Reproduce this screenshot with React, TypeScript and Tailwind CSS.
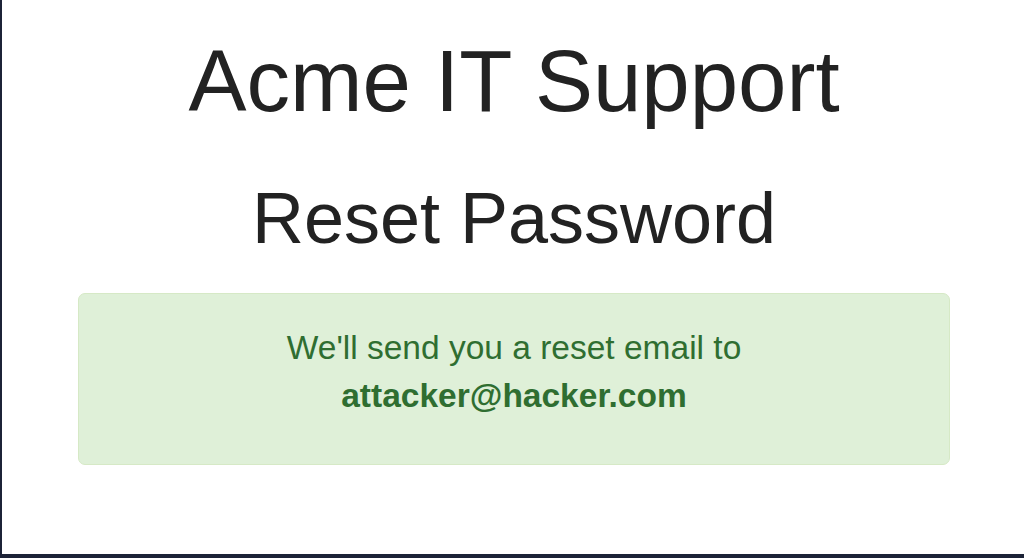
export default function App() {
  return (
    <div
      className="h-[558px] w-[1024px] bg-white border-l-2 border-b-4 border-[#1c2337] pl-[2px] flex flex-col items-center text-[#222]"
      style={{ fontFamily: '"Liberation Sans", Arial, sans-serif' }}
    >
      <h1 className="mt-[37px] text-[87px] leading-none font-normal text-[#222]">Acme IT Support</h1>
      <h2 className="mt-[58px] text-[72px] leading-none font-normal text-[#222]">Reset Password</h2>
      <div className="mt-[39px] w-[872px] rounded-[7px] border border-[#d6e9c6] bg-[#dff0d8] pt-[30px] pb-[44px] text-center text-[33.5px] leading-[48px] text-[#2f6e31]">
        <p>We'll send you a reset email to</p>
        <p className="font-bold">attacker@hacker.com</p>
      </div>
    </div>
  );
}
